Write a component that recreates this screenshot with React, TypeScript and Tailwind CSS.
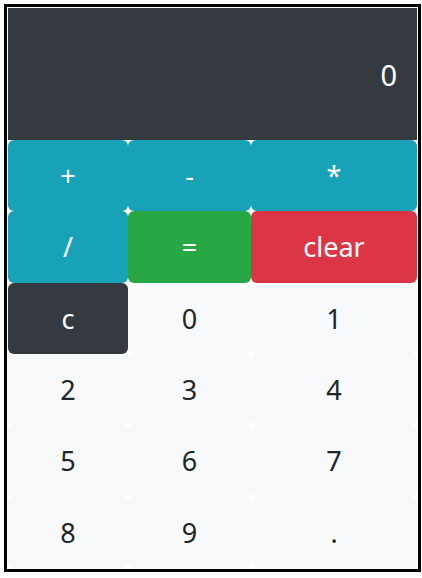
import React from "react";

type B = { label: string; cls: string };

const rows: B[][] = [
  [
    { label: "+", cls: "bg-[#17a2b8] text-white" },
    { label: "-", cls: "bg-[#17a2b8] text-white" },
    { label: "*", cls: "bg-[#17a2b8] text-white" },
  ],
  [
    { label: "/", cls: "bg-[#17a2b8] text-white" },
    { label: "=", cls: "bg-[#28a745] text-white" },
    { label: "clear", cls: "bg-[#dc3545] text-white" },
  ],
  [
    { label: "c", cls: "bg-[#343a40] text-white" },
    { label: "0", cls: "bg-[#f8f9fa] text-[#212529]" },
    { label: "1", cls: "bg-[#f8f9fa] text-[#212529]" },
  ],
  [
    { label: "2", cls: "bg-[#f8f9fa] text-[#212529]" },
    { label: "3", cls: "bg-[#f8f9fa] text-[#212529]" },
    { label: "4", cls: "bg-[#f8f9fa] text-[#212529]" },
  ],
  [
    { label: "5", cls: "bg-[#f8f9fa] text-[#212529]" },
    { label: "6", cls: "bg-[#f8f9fa] text-[#212529]" },
    { label: "7", cls: "bg-[#f8f9fa] text-[#212529]" },
  ],
  [
    { label: "8", cls: "bg-[#f8f9fa] text-[#212529]" },
    { label: "9", cls: "bg-[#f8f9fa] text-[#212529]" },
    { label: ".", cls: "bg-[#f8f9fa] text-[#212529]" },
  ],
];

export default function App() {
  return (
    <div className="bg-white w-[422px] h-[578px] p-1" style={{ fontFamily: '"Noto Sans", "Open Sans", sans-serif' }}>
      <div className="w-[417px] h-[568px] border-[3px] border-black p-px bg-white flex flex-col">
        <div className="h-[132px] bg-[#343a40] text-white flex items-center justify-end pr-[20px] text-[29px] leading-none">
          0
        </div>
        <div className="flex-1 grid grid-cols-[120px_123px_1fr] grid-rows-6">
          {rows.flat().map((b, i) => (
            <button
              key={i}
              className={`${b.cls} rounded-[6px] flex items-center justify-center text-[27px] leading-none`}
            >
              {b.label}
            </button>
          ))}
        </div>
      </div>
    </div>
  );
}
